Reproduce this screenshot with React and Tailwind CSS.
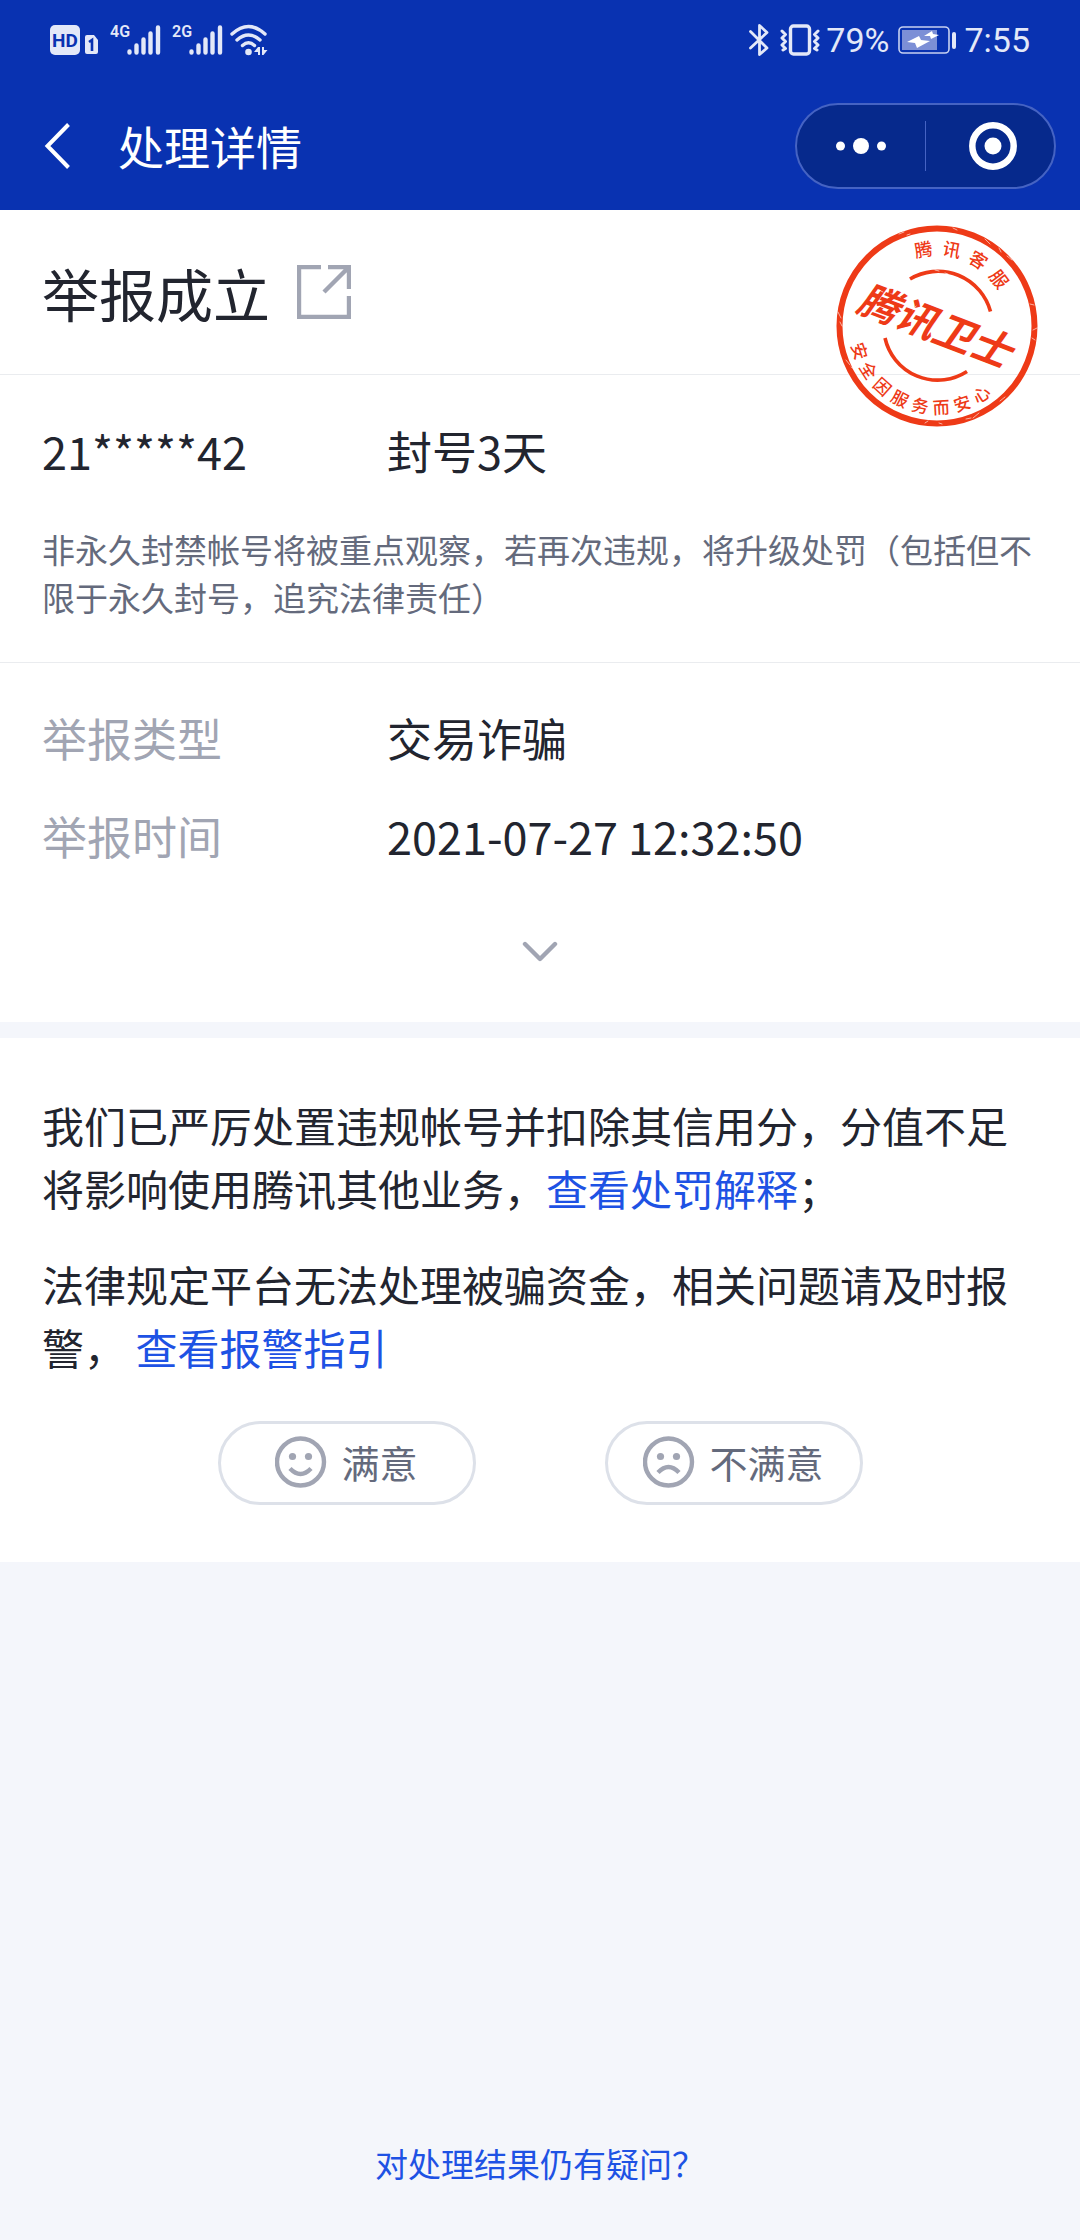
import React, { useState } from 'react';

const TOP_CHARS = [
  { char: '腾', angle: -10 },
  { char: '讯', angle: 11 },
  { char: '客', angle: 32 },
  { char: '服', angle: 53 },
];

const BOTTOM_CHARS = [
  { char: '安', angle: 72 },
  { char: '全', angle: 57 },
  { char: '因', angle: 42 },
  { char: '服', angle: 27 },
  { char: '务', angle: 12 },
  { char: '而', angle: -3 },
  { char: '安', angle: -18 },
  { char: '心', angle: -33 },
];

function HdIcon() {
  return (
    <svg width="49" height="32" viewBox="0 0 49 32">
      <rect x="0" y="1" width="30" height="30" rx="5" fill="#e3e8f8" />
      <text x="15" y="23" textAnchor="middle" fontFamily="Roboto, sans-serif" fontWeight="700" fontSize="19" fill="#0932b1">HD</text>
      <path d="M37 11h7l4 5v12q0 2-2 2h-9q-2 0-2-2V13q0-2 2-2z" fill="#e3e8f8" />
      <path d="M39 18l3-2v11" fill="none" stroke="#0932b1" strokeWidth="2.6" />
    </svg>
  );
}

function Signal({ label }) {
  return (
    <svg width="51" height="40" viewBox="0 -4 51 40">
      <text x="0" y="13" fontFamily="Roboto, sans-serif" fontWeight="600" fontSize="16" fill="#e3e8f8">{label}</text>
      <g stroke="#e3e8f8" strokeWidth="4.4" strokeLinecap="round">
        <path d="M19.5 27.5v1M26.5 21.5v7M33.5 15.5v13M40.5 9.5v19M48 3.5v25" />
      </g>
    </svg>
  );
}

function WifiIcon() {
  return (
    <svg width="38" height="32" viewBox="0 0 38 32">
      <g fill="none" stroke="#e3e8f8" strokeWidth="3.4" strokeLinecap="round">
        <path d="M2 10Q18.500-5 35 10" />
        <path d="M7 16Q18.500 6 30 16" />
        <path d="M12.500 21.500Q18.500 16 24.500 21.500" />
      </g>
      <circle cx="18.500" cy="28" r="3.300" fill="#e3e8f8" />
      <path d="M24 28l4-5h2v8h-2v-3zM32 23v8h1.500l4-5h-3.500v-3z" fill="#e3e8f8" />
    </svg>
  );
}

function BluetoothIcon() {
  return (
    <svg width="20" height="32" viewBox="0 0 20 32" fill="none" stroke="#e3e8f8" strokeWidth="2.8" strokeLinecap="round" strokeLinejoin="round">
      <path d="M1.500 7.500L18 24l-7.500 6.500v-29L18 8.500 1.500 24" />
    </svg>
  );
}

function VibrateIcon() {
  return (
    <svg width="40" height="32" viewBox="0 0 40 32" fill="none" stroke="#e3e8f8" strokeWidth="3" strokeLinecap="round" strokeLinejoin="round">
      <rect x="10.500" y="2" width="19" height="28" rx="3" strokeWidth="3.400" />
      <path d="M2 7l3.500 3.500L2 14l3.500 3.500L2 21l3.500 3.500L3 26M38 7l-3.500 3.500L38 14l-3.500 3.500L38 21l-3.500 3.500L37 26" />
    </svg>
  );
}

function BatteryIcon() {
  return (
    <svg width="58" height="28" viewBox="0 0 58 28">
      <rect x="1" y="1" width="50" height="26" rx="4" fill="none" stroke="#c7d1f1" strokeWidth="1.600" />
      <rect x="4" y="4" width="35" height="20" fill="#7c8fd6" />
      <path d="M9 16l12-6 2 4 9 1-13 7-2-5zM26 10l8-5 1 3 6 1-8 4-1-3z" fill="#fff" />
      <rect x="54" y="6" width="4" height="17" rx="2" fill="#e3e8f8" />
    </svg>
  );
}

function StatusBar() {
  return (
    <div className="h-20 flex items-center justify-between px-[50px] font-[Roboto,sans-serif] text-[34px] leading-10 text-[#e3e8f8]">
      <div className="flex items-center gap-[11px]">
        <HdIcon />
        <Signal label="4G" />
        <div className="flex items-center gap-[7px]">
          <Signal label="2G" />
          <WifiIcon />
        </div>
      </div>
      <div className="flex items-center">
        <BluetoothIcon />
        <span className="ml-[11px]"><VibrateIcon /></span>
        <span className="ml-1.5">79%</span>
        <span className="ml-[9px] mr-2"><BatteryIcon /></span>
        <span>7:55</span>
      </div>
    </div>
  );
}

function NavBar() {
  return (
    <div className="flex items-center justify-between pl-[43px] pr-6 pb-[21px] pt-[23px]">
      <div className="flex items-center">
        <button type="button" aria-label="返回">
          <svg width="28" height="46" viewBox="0 0 28 46" fill="none" stroke="#fff" strokeWidth="4">
            <path d="M25.500 1.500L4.500 23l21 21.500" />
          </svg>
        </button>
        <h1 className="ml-[47px] pb-[3px] text-[46px] leading-[66px] text-white">处理详情</h1>
      </div>
      <div className="w-[261px] h-[86px] flex items-center rounded-full border-2 border-[#4563c3] bg-[#06298c]">
        <button type="button" aria-label="更多" className="w-32 flex justify-center">
          <svg width="50" height="16" viewBox="0 0 50 16" fill="#fff">
            <circle cx="4.500" cy="8" r="4.500" />
            <circle cx="25" cy="8" r="8" />
            <circle cx="45.500" cy="8" r="4.500" />
          </svg>
        </button>
        <span className="w-px h-[50px] bg-[#4563c3]" />
        <button type="button" aria-label="关闭" className="w-32 flex justify-center pl-1.5">
          <svg width="48" height="48" viewBox="0 0 48 48">
            <circle cx="24" cy="24" r="20.700" fill="none" stroke="#fff" strokeWidth="6.500" />
            <circle cx="24" cy="24" r="8.500" fill="#fff" />
          </svg>
        </button>
      </div>
    </div>
  );
}

function Stamp() {
  return (
    <svg
      className="absolute right-[42px] top-[15px]"
      width="202"
      height="202"
      viewBox="-101 -101 202 202"
      fontFamily="'Noto Sans CJK SC', sans-serif"
      fill="#ee3a17"
      textAnchor="middle"
    >
      <circle r="97.500" fill="none" stroke="#ee3a17" strokeWidth="6" />
      <g fill="none" stroke="#ee3a17" strokeWidth="3.600">
        <path d="M-27-47A54.500 54.500 0 0 1 53.500-14.500" />
        <path d="M-52 12A54 54 0 0 0 30 45.500" />
      </g>
      {TOP_CHARS.map(({ char, angle }) => (
        <text key={angle} y="-71" fontSize="18" fontWeight="500" transform={`rotate(${angle})`}>{char}</text>
      ))}
      {BOTTOM_CHARS.map(({ char, angle }) => (
        <text key={angle} y="88" fontSize="17" fontWeight="500" transform={`rotate(${angle})`}>{char}</text>
      ))}
      <text x="-2" y="15" fontSize="40" fontWeight="700" fontStyle="italic" transform="rotate(21)">腾讯卫士</text>
      {/* worn ink */}
      <g fill="none" stroke="#fff" strokeOpacity="0.6" strokeWidth="1" strokeLinecap="round">
        <path d="M-38-92l5-2M-30-91l3-1M16-98l4 2M48-87l5 5M62-78l2 4M70-70l5 4M93-22l4 1M96 4l4-2M95 12l3 2" />
        <path d="M-99-14l3 6M-97-4l2 4M-91 34l4 5M-86 41l3 2M68 71l-5 4M42 87l-6 5M34 92l-5 1M2 97l3 1M-12 97l3-2" />
        <path d="M-2-56l4 1M8-53l3 1M-21-20l-3 4M-39 46l4 2M-58-36l4 2M14-2l3 4M60 34l3-2" />
      </g>
    </svg>
  );
}

function FaceIcon({ mouth }) {
  return (
    <svg width="52" height="52" viewBox="0 0 52 52" fill="#a1a5b3">
      <circle cx="25.500" cy="26" r="23.500" fill="none" stroke="#a1a5b3" strokeWidth="4.400" />
      <circle cx="17.500" cy="20.500" r="3.600" />
      <circle cx="33.500" cy="20.500" r="3.600" />
      <path d={mouth} fill="none" stroke="#a1a5b3" strokeWidth="4.400" />
    </svg>
  );
}

function RateButton({ label, mouth }) {
  return (
    <button type="button" className="w-[258px] h-[84px] flex items-center justify-center gap-[14px] rounded-full border-3 border-[#dde1e9] pb-0.5 text-[38px] leading-[56px] text-[#646a7c]">
      <FaceIcon mouth={mouth} />
      {label}
    </button>
  );
}

function Row({ label, children }) {
  return (
    <div className="grid grid-cols-[345px_1fr] text-[45px] leading-[64px]">
      <dt className="text-[#a1a5b3]">{label}</dt>
      <dd>{children}</dd>
    </div>
  );
}

export default function App() {
  const [expanded, setExpanded] = useState(false);

  return (
    <div className="min-h-screen flex flex-col bg-[#f4f6fb] text-[#22252f] font-['Noto_Sans_CJK_SC',sans-serif]">
      <header className="bg-[#0932b1]">
        <StatusBar />
        <NavBar />
      </header>

      <main>
        <div className="bg-white">
          <section className="relative flex items-center gap-[27px] px-[42px] py-10 border-b border-[#eaecef]">
            <h2 className="text-[57px] leading-[84px]">举报成立</h2>
            <a href="#share" aria-label="打开">
              <svg width="54" height="54" viewBox="0 0 54 54" fill="none" stroke="#a1a5b3" strokeWidth="4.400">
                <path d="M24 2H2v50h50V31M31 2h21v22M51 3L27 27" />
              </svg>
            </a>
            <Stamp />
          </section>

          <section className="px-[42px] pt-11 pb-[41px] border-b border-[#eaecef]">
            <div className="grid grid-cols-[345px_1fr] text-[45px] leading-[64px]">
              <span>21*****42</span>
              <span>封号3天</span>
            </div>
            <p className="mt-[42px] -mr-2 text-[33px] leading-[48px] text-[#646a7c]">
              非永久封禁帐号将被重点观察，若再次违规，将升级处罚（包括但不限于永久封号，追究法律责任）
            </p>
          </section>

          <section className="px-[42px] pt-[43px] pb-[50px]">
            <dl className="flex flex-col gap-[34px]">
              <Row label="举报类型">交易诈骗</Row>
              <Row label="举报时间">2021-07-27 12:32:50</Row>
            </dl>
            <button
              type="button"
              aria-label="展开"
              aria-expanded={expanded}
              onClick={() => setExpanded(!expanded)}
              className="flex mx-auto mt-[64px] h-10 items-center"
            >
              <svg width="36" height="22" viewBox="0 0 36 22" fill="none" stroke="#a1a5b3" strokeWidth="4.400" strokeLinecap="round" strokeLinejoin="round">
                <path d="M3 3l15 15L33 3" />
              </svg>
            </button>
          </section>
        </div>

        <section className="mt-4 bg-white px-[42px] pt-[55px] pb-[57px] text-[42px] leading-[63px]">
          <p>
            我们已严厉处置违规帐号并扣除其信用分，分值不足将影响使用腾讯其他业务，<a href="#explain" className="text-[#1e52e4]">查看处罚解释</a>；
          </p>
          <p className="mt-[33px]">
            法律规定平台无法处理被骗资金，相关问题请及时报警， <a href="#guide" className="text-[#1e52e4]">查看报警指引</a>
          </p>
          <div className="mt-[43px] flex justify-center gap-[129px]">
            <RateButton label="满意" mouth="M15 32.500q10.500 11 21 0" />
            <RateButton label="不满意" mouth="M15 36.500q10.500-11 21 0" />
          </div>
        </section>
      </main>

      <footer className="mt-auto pb-[53px] text-center text-[33px] leading-[48px]">
        <a href="#appeal" className="text-[#1e52e4]">对处理结果仍有疑问？</a>
      </footer>
    </div>
  );
}
